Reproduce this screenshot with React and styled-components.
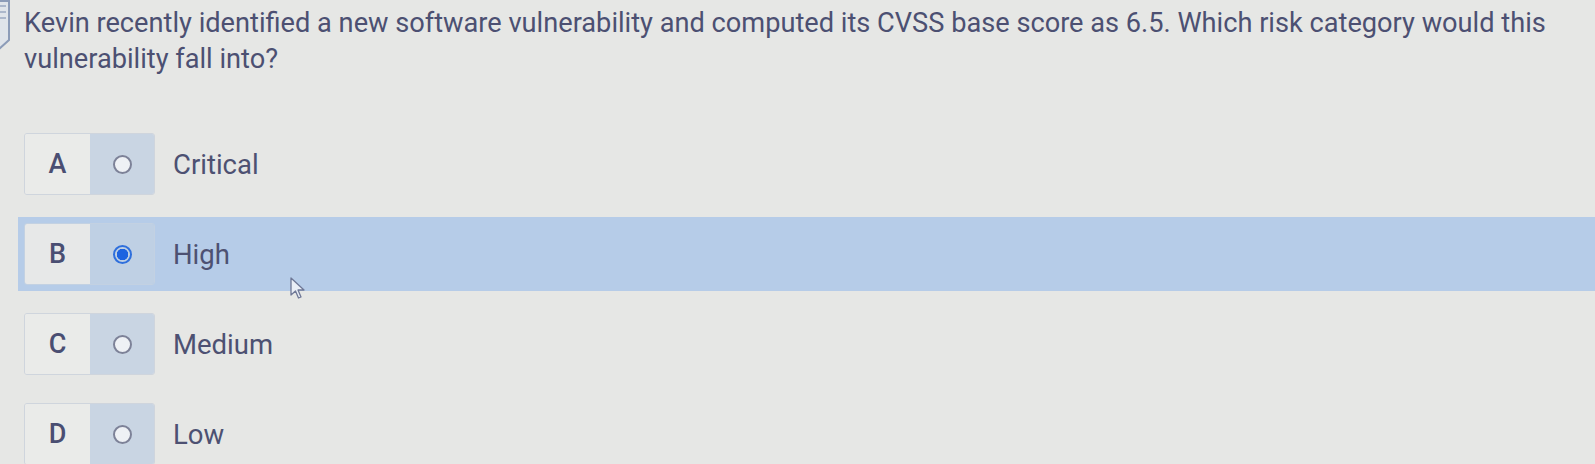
import styled, { createGlobalStyle } from "styled-components";

const GlobalStyle = createGlobalStyle`
  html, body {
    margin: 0;
    padding: 0;
    background: #e6e7e5;
  }
  body {
    font-family: Roboto, "Liberation Sans", Arial, sans-serif;
    color: #4c5070;
    overflow: hidden;
  }
`;

const options = [
  { key: "A", label: "Critical" },
  { key: "B", label: "High", selected: true },
  { key: "C", label: "Medium" },
  { key: "D", label: "Low" },
];

const App = () => {
  return (
    <>
      <GlobalStyle />
      <Page>
        <QuestionRow>
          <FlagCell>
            <svg width="12" height="52" viewBox="0 0 12 52">
              <path
                d="M-2 1 H9 V40 L-2 50"
                fill="#dfe4ea"
                stroke="#8c9cb8"
                strokeWidth="2"
              />
              <line x1="0" y1="6" x2="6" y2="6" stroke="#9aa8c0" strokeWidth="1.5" />
              <line x1="0" y1="12" x2="6" y2="12" stroke="#9aa8c0" strokeWidth="1.5" />
              <line x1="0" y1="18" x2="6" y2="18" stroke="#9aa8c0" strokeWidth="1.5" />
            </svg>
          </FlagCell>
          <Question>
            Kevin recently identified a new software vulnerability and computed
            its CVSS base score as 6.5. Which risk category would this
            vulnerability fall into?
          </Question>
        </QuestionRow>

        <OptionList>
          {options.map((o) => (
            <OptionRow key={o.key} $selected={o.selected}>
              <ChoiceBox $selected={o.selected}>
                <LetterCell $selected={o.selected}>{o.key}</LetterCell>
                <RadioCell $selected={o.selected}>
                  <Radio $selected={o.selected} />
                </RadioCell>
              </ChoiceBox>
              <Label>{o.label}</Label>
              {o.selected && (
                <Cursor width="17" height="23" viewBox="0 0 17 23">
                  <path
                    d="M1 1 L1 18 L5.5 14 L8.5 21 L11 20 L8 13 L14 13 Z"
                    fill="#e9eef6"
                    stroke="#6f7896"
                    strokeWidth="1.3"
                    strokeLinejoin="round"
                  />
                </Cursor>
              )}
            </OptionRow>
          ))}
        </OptionList>
      </Page>
    </>
  );
};

export default App;

const Page = styled.div`
  width: 1595px;
  height: 464px;
  display: flex;
  flex-direction: column;
`;

const QuestionRow = styled.div`
  display: flex;
  align-items: flex-start;
  padding-top: 5px;
`;

const FlagCell = styled.div`
  width: 24px;
  flex-shrink: 0;
  margin-top: -5px;
  svg {
    display: block;
  }
`;

const Question = styled.p`
  margin: 0;
  width: 1568px;
  font-size: 27.2px;
  line-height: 36px;
  font-weight: 400;
  color: #4c5072;
`;

const OptionList = styled.div`
  display: flex;
  flex-direction: column;
  gap: 16px;
  margin-top: 50px;
  margin-left: 18px;
`;

const OptionRow = styled.div`
  position: relative;
  display: flex;
  align-items: center;
  height: 74px;
  box-sizing: border-box;
  padding: 6px 0 6px 6px;
  background: ${(p) => (p.$selected ? "#b6cce8" : "transparent")};
`;

const ChoiceBox = styled.div`
  display: flex;
  width: 131px;
  height: 62px;
  box-sizing: border-box;
  border: 1.5px solid ${(p) => (p.$selected ? "#c3d1e2" : "#cfd5dd")};
  border-radius: 3px;
  overflow: hidden;
`;

const LetterCell = styled.div`
  width: 65px;
  display: flex;
  align-items: center;
  justify-content: center;
  background: ${(p) => (p.$selected ? "#e7e8e8" : "#eaebe9")};
  font-size: 27px;
  font-weight: 500;
  color: #4a4e72;
`;

const RadioCell = styled.div`
  flex: 1;
  display: flex;
  align-items: center;
  justify-content: center;
  background: ${(p) => (p.$selected ? "#bfd0e4" : "#c9d5e3")};
`;

const Radio = styled.span`
  width: 19px;
  height: 19px;
  box-sizing: border-box;
  border-radius: 50%;
  border: 2px solid ${(p) => (p.$selected ? "#2f6fdc" : "#7d8298")};
  background: ${(p) =>
    p.$selected
      ? "radial-gradient(circle, #1d63e0 0 5.5px, transparent 6px)"
      : "#eef1f5"};
`;

const Label = styled.span`
  margin-left: 18px;
  font-size: 27.5px;
  color: #4d5172;
`;

const Cursor = styled.svg`
  position: absolute;
  left: 272px;
  top: 60px;
`;
